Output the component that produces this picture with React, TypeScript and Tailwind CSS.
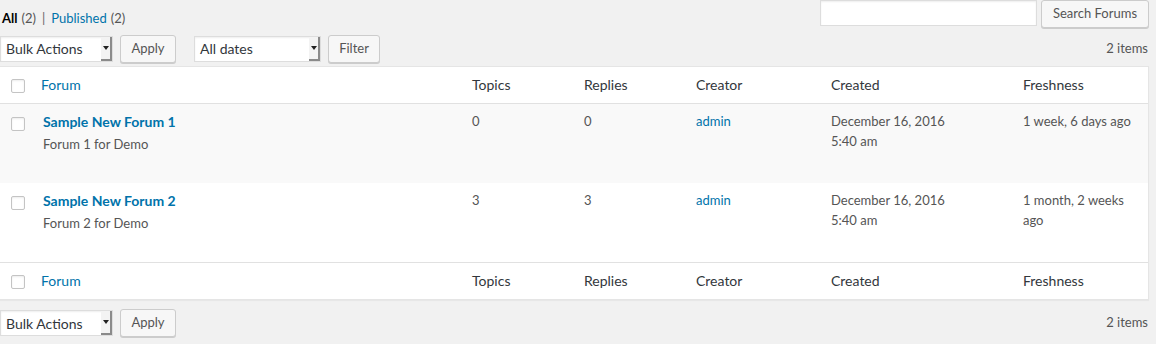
import React from 'react';

interface ForumRow {
  title: string;
  description: string;
  topics: number;
  replies: number;
  creator: string;
  created: string;
  time: string;
  freshness: string;
}

const rows: ForumRow[] = [
  {
    title: 'Sample New Forum 1',
    description: 'Forum 1 for Demo',
    topics: 0,
    replies: 0,
    creator: 'admin',
    created: 'December 16, 2016',
    time: '5:40 am',
    freshness: '1 week, 6 days ago'
  },
  {
    title: 'Sample New Forum 2',
    description: 'Forum 2 for Demo',
    topics: 3,
    replies: 3,
    creator: 'admin',
    created: 'December 16, 2016',
    time: '5:40 am',
    freshness: '1 month, 2 weeks ago'
  }
];

const cols = 'grid grid-cols-[33px_429px_112px_112px_135px_192px_135px]';

const Select: React.FC<{ label: string; width: string }> = ({ label, width }) => (
  <div className={`${width} h-[26px] flex items-stretch bg-white border border-[#ddd] shadow-[inset_0_1px_2px_rgba(0,0,0,0.07)]`}>
    <span className="flex-1 pl-[5px] flex items-center text-[14px] text-[#32373c]">{label}</span>
    <span className="w-[11px] flex items-center justify-center border-r-2 border-b-2 border-[#8a8a8a] bg-[#f3f3f3]">
      <svg width="6" height="4" viewBox="0 0 6 4">
        <path d="M0 0h6L3 4z" fill="#222" />
      </svg>
    </span>
  </div>
);

const Button: React.FC<{ children: React.ReactNode; width: string }> = ({ children, width }) => (
  <button className={`${width} h-[28px] flex items-center justify-center rounded-[3px] border border-[#ccc] bg-[#f7f7f7] text-[13px] text-[#555] shadow-[0_1px_0_#ccc]`}>
    {children}
  </button>
);

const Checkbox: React.FC = () => (
  <span className="block w-[14px] h-[14px] rounded-[2px] border border-[#c4c4c4] bg-white shadow-[inset_0_1px_2px_rgba(0,0,0,0.08)]" />
);

const HeaderRow: React.FC<{ border: string }> = ({ border }) => (
  <div className={`${cols} h-[37px] items-center bg-white ${border} border-[#e1e1e1] text-[14px] text-[#32373c]`}>
    <div className="pl-[11px] pt-[1px]"><Checkbox /></div>
    <div className="pl-[8px] pb-[2px] text-[#0073aa]">Forum</div>
    <div className="pl-[10px] pb-[2px]">Topics</div>
    <div className="pl-[10px] pb-[2px]">Replies</div>
    <div className="pl-[10px] pb-[2px]">Creator</div>
    <div className="pl-[10px] pb-[2px]">Created</div>
    <div className="pl-[10px] pb-[2px]">Freshness</div>
  </div>
);

export default function App() {
  return (
    <div className="w-[1156px] h-[344px] overflow-hidden bg-[#f1f1f1] font-['Lato',sans-serif] text-[13px] text-[#555]">
      <div className="flex items-start h-[34px]">
        <div className="pl-[2px] pt-[9px] leading-[19px] flex items-center gap-[4px]">
          <span className="font-bold text-[#000]">All</span>
          <span>(2)</span>
          <span className="px-[2px] text-[#666]">|</span>
          <span className="text-[#0073aa]">Published</span>
          <span>(2)</span>
        </div>
        <div className="ml-auto flex items-start gap-[4px] pr-[7px]">
          <div className="w-[217px] h-[26px] bg-white border border-[#ddd] shadow-[inset_0_1px_2px_rgba(0,0,0,0.07)]" />
          <Button width="w-[108px]">Search Forums</Button>
        </div>
      </div>

      <div className="flex items-center h-[29px] pr-[8px]">
        <Select label="Bulk Actions" width="w-[113px]" />
        <div className="ml-[7px]"><Button width="w-[56px]">Apply</Button></div>
        <div className="ml-[18px]"><Select label="All dates" width="w-[127px]" /></div>
        <div className="ml-[7px]"><Button width="w-[52px]">Filter</Button></div>
        <span className="ml-auto">2 items</span>
      </div>

      <div className="mt-[3px] w-[1149px] border border-l-0 border-[#e5e5e5] shadow-[0_1px_1px_rgba(0,0,0,0.04)]">
        <HeaderRow border="border-b" />
        {rows.map((row, i) => (
          <div
            key={row.title}
            className={`${cols} h-[79px] items-start pt-[8px] leading-[19.5px] ${i === 0 ? 'bg-[#f9f9f9]' : 'bg-white'}`}
          >
            <div className="pl-[11px] pt-[5px]"><Checkbox /></div>
            <div className="pl-[10px]">
              <div className="text-[14px] font-bold text-[#0073aa]">{row.title}</div>
              <div className="mt-[3px]">{row.description}</div>
            </div>
            <div className="pl-[10px]">{row.topics}</div>
            <div className="pl-[10px]">{row.replies}</div>
            <div className="pl-[10px] text-[#0073aa]">{row.creator}</div>
            <div className="pl-[10px]">
              <div>{row.created}</div>
              <div>{row.time}</div>
            </div>
            <div className="pl-[10px] pr-[4px]">{row.freshness}</div>
          </div>
        ))}
        <HeaderRow border="border-t" />
      </div>

      <div className="flex items-center h-[28px] mt-[9px] pr-[8px]">
        <Select label="Bulk Actions" width="w-[113px]" />
        <div className="ml-[7px]"><Button width="w-[56px]">Apply</Button></div>
        <span className="ml-auto">2 items</span>
      </div>
    </div>
  );
}
